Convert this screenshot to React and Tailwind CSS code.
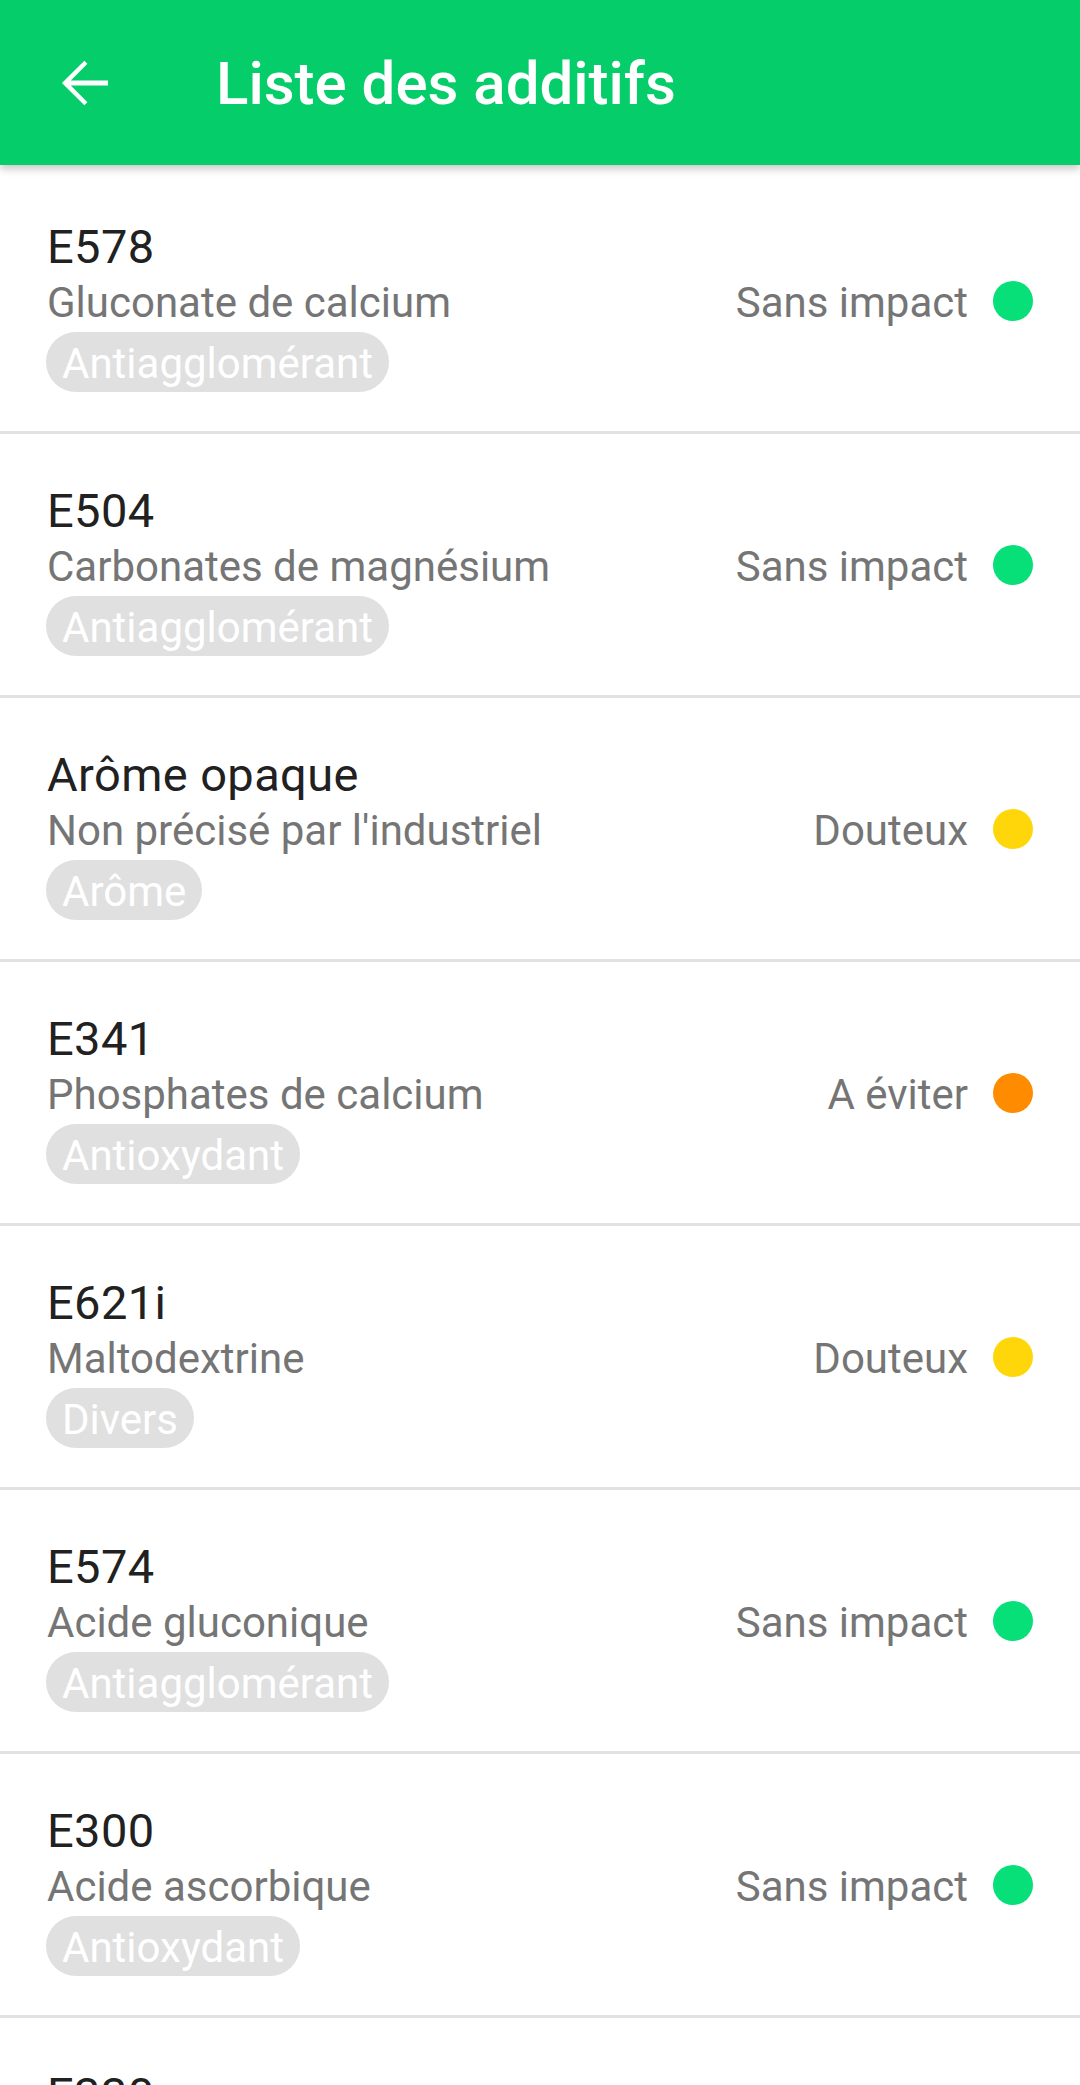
import React from "react";

const items = [
  { code: "E578", name: "Gluconate de calcium", tag: "Antiagglomérant", status: "Sans impact", color: "bg-[#07df78]" },
  { code: "E504", name: "Carbonates de magnésium", tag: "Antiagglomérant", status: "Sans impact", color: "bg-[#07df78]" },
  { code: "Arôme opaque", name: "Non précisé par l'industriel", tag: "Arôme", status: "Douteux", color: "bg-[#ffd60a]" },
  { code: "E341", name: "Phosphates de calcium", tag: "Antioxydant", status: "A éviter", color: "bg-[#ff8c00]" },
  { code: "E621i", name: "Maltodextrine", tag: "Divers", status: "Douteux", color: "bg-[#ffd60a]" },
  { code: "E574", name: "Acide gluconique", tag: "Antiagglomérant", status: "Sans impact", color: "bg-[#07df78]" },
  { code: "E300", name: "Acide ascorbique", tag: "Antioxydant", status: "Sans impact", color: "bg-[#07df78]" },
  { code: "E330", name: "Acide citrique", tag: "Acidifiant", status: "Sans impact", color: "bg-[#07df78]" },
];

function Row({ item }) {
  return (
    <div className="flex h-[264px] shrink-0 border-b-[3px] border-[#e2e2e2] pl-[47px] pr-[47px]">
      <div className="flex flex-1 flex-col pt-[50px]">
        <div className="text-[47px] leading-[54px] tracking-[0.4px] text-[#212121]">{item.code}</div>
        <div className="text-[42px] leading-[58px] text-[#757575]">{item.name}</div>
        <div className="flex">
          <div className="-ml-[1px] h-[60px] rounded-full bg-[#e0e0e0] px-[16px] pt-[4px] text-[42px] leading-[56px] text-white">
            {item.tag}
          </div>
        </div>
      </div>
      <div className="mt-[104px] flex h-[58px] items-center gap-[25px]">
        <span className="text-[42px] leading-[58px] text-[#757575]">{item.status}</span>
        <span className={`-mt-[4px] h-[40px] w-[40px] rounded-full ${item.color}`} />
      </div>
    </div>
  );
}

export default function App() {
  return (
    <div
      className="flex h-[2085px] w-[1080px] flex-col overflow-hidden bg-white"
      style={{ fontFamily: "Roboto, 'Noto Sans', sans-serif" }}
    >
      <div className="relative z-10 flex h-[165px] shrink-0 items-center bg-[#05cd6a] pl-[48px] pt-[2px] shadow-[0_4px_8px_rgba(0,0,0,0.22)]">
        <svg width="72" height="72" viewBox="0 0 24 24" fill="white" className="-mt-[2px]">
          <path d="M20 11.15H7.6l5.55-5.55L12.1 4.55 4.65 12l7.45 7.45 1.05-1.05L7.6 12.85H20z" />
        </svg>
        <div className="ml-[96px] text-[60px] font-medium leading-none text-white">Liste des additifs</div>
      </div>
      <div className="flex flex-col pt-[5px]">
        {items.map((it) => (
          <Row key={it.code} item={it} />
        ))}
      </div>
    </div>
  );
}
